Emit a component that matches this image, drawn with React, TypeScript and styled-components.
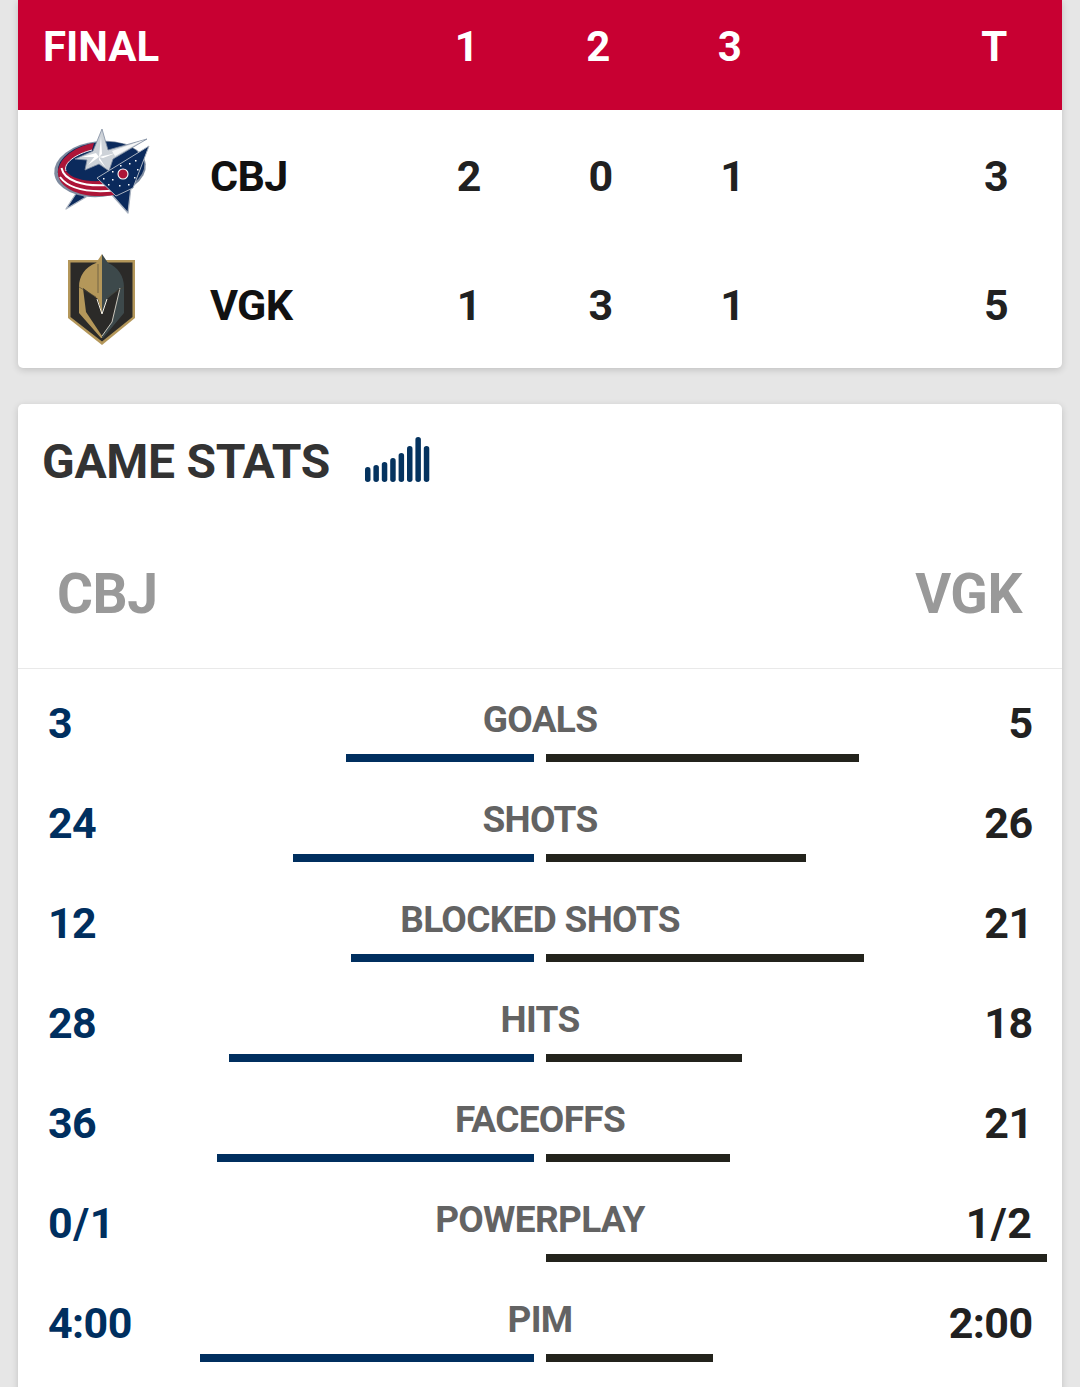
import React from "react";
import styled, { createGlobalStyle } from "styled-components";

const Global = createGlobalStyle`
  html, body { margin: 0; padding: 0; background: #e6e6e6; }
  body { font-family: Roboto, "Liberation Sans", sans-serif; height: 1387px; overflow: hidden; }
`;

const Page = styled.div`
  display: flex;
  flex-direction: column;
  gap: 36px;
  padding: 0 18px;
  height: 1387px;
  overflow: hidden;
`;

const Card = styled.section`
  background: #fff;
  border-radius: 5px;
  box-shadow: 0 2px 7px rgba(0, 0, 0, 0.16);
`;

const ScoreCard = styled(Card)`
  border-radius: 0 0 5px 5px;
  height: 368px;
  flex: none;
`;

const ScoreHeader = styled.div`
  display: grid;
  grid-template-columns: 383px repeat(3, 131.5px) 133px 131.5px;
  height: 110px;
  align-items: center;
  background: #c80032;
  color: #fff;
  font-size: 42px;
  font-weight: 700;
  padding-bottom: 18px;
  box-sizing: border-box;
`;

const HeaderTitle = styled.div`
  padding-left: 25px;
`;

const HeaderCell = styled.div`
  text-align: center;
`;

const TeamRow = styled.div`
  display: grid;
  grid-template-columns: 193px 192px repeat(3, 131.8px) 132px 131.5px;
  align-items: center;
  height: 129px;
  padding-top: 2px;
  box-sizing: border-box;
  color: #212121;
  font-size: 43px;
  font-weight: 700;
`;

const LogoCell = styled.div`
  display: flex;
  justify-content: center;
  padding: 0 25px 11px 0;
`;

const TeamName = styled.div`
  color: #111;
  letter-spacing: -0.7px;
  margin-left: -1px;
`;

const ScoreCell = styled.div`
  text-align: center;
  letter-spacing: -0.4px;
`;

const StatsCard = styled(Card)`
  flex: none;
  height: 1100px;
`;

const StatsTitleRow = styled.div`
  display: flex;
  align-items: center;
  gap: 35px;
  padding: 27px 0 1px 24px;
  height: 60px;
`;

const StatsTitle = styled.h2`
  margin: 0;
  color: #333;
  font-size: 48px;
  font-weight: 700;
  letter-spacing: -0.3px;
`;

const TeamsHeader = styled.div`
  display: flex;
  justify-content: space-between;
  align-items: center;
  height: 177px;
  padding: 28px 40px 0 39px;
  box-sizing: border-box;
  border-bottom: 1px solid #e9e9e9;
  color: #999;
  font-size: 55px;
  font-weight: 700;
  letter-spacing: -0.4px;
`;

const StatList = styled.div`
  display: flex;
  flex-direction: column;
`;

const StatRow = styled.div`
  display: grid;
  grid-template-columns: 1fr 1fr;
  grid-template-rows: 85px 15px;
  position: relative;
  height: 100px;
`;

const Value = styled.div<{ $side: "left" | "right"; $fraction?: boolean }>`
  align-self: center;
  padding: ${(p) => (p.$side === "left" ? "23px 30px 0" : "23px 29.500px 0 30px")};
  font-size: 43px;
  font-weight: 700;
  font-kerning: none;
  letter-spacing: ${(p) => (p.$fraction ? "0.5px" : "-0.6px")};
  color: ${(p) => (p.$side === "left" ? "#002f5f" : "#212121")};
  text-align: ${(p) => p.$side};
`;

const StatLabel = styled.div`
  position: absolute;
  left: 0;
  right: 0;
  top: 29px;
  text-align: center;
  color: #636363;
  font-size: 37px;
  line-height: 44px;
  font-weight: 700;
  letter-spacing: -0.68px;
`;

const BarTrack = styled.div<{ $side: "left" | "right" }>`
  display: flex;
  justify-content: ${(p) => (p.$side === "left" ? "flex-end" : "flex-start")};
  padding: ${(p) => (p.$side === "left" ? "0 6px 0 0" : "0 0 0 6px")};
`;

const Bar = styled.div<{ $side: "left" | "right" }>`
  height: 8px;
  background: ${(p) => (p.$side === "left" ? "#002f5f" : "#23231c")};
`;

const SignalWrap = styled.div`
  display: flex;
  margin: -4px 0 0 0;
`;

const stats = [
  { label: "GOALS", l: "3", r: "5", a: 3, b: 5 },
  { label: "SHOTS", l: "24", r: "26", a: 24, b: 26 },
  { label: "BLOCKED SHOTS", l: "12", r: "21", a: 12, b: 21 },
  { label: "HITS", l: "28", r: "18", a: 28, b: 18 },
  { label: "FACEOFFS", l: "36", r: "21", a: 36, b: 21 },
  { label: "POWERPLAY", l: "0/1", r: "1/2", a: 0, b: 1 },
  { label: "PIM", l: "4:00", r: "2:00", a: 4, b: 2 },
];

const CbjLogo = () => (
  <svg width="105" height="90" viewBox="0 0 105 90">
    <path d="M27 67L16 84 36 72ZM62 70L78 88 81 62Z" fill="#0b2a5c" stroke="#a9b2bf" strokeWidth="1.300" strokeLinejoin="round" />
    <ellipse cx="50" cy="44" rx="46" ry="28" fill="#7f8ca0" transform="rotate(-6 50 44)" />
    <ellipse cx="51" cy="43" rx="43.500" ry="26" fill="#0b2a5c" transform="rotate(-6 51 43)" />
    <path d="M44 18C22 22 7 36 8 49 9 63 30 72 52 71 64 71 74 68 80 62L58 55C42 58 22 55 16 46 13 38 26 29 42 25Z" fill="#ad1538" />
    <path d="M16 46C13 38 26 29 42 25" fill="none" stroke="#e8ebef" strokeWidth="1" />
    <path d="M11.500 43C14 55 32 62 58 60M10 52C18 63 36 68 64 65.500" fill="none" stroke="#fff" strokeWidth="2" />
    <path d="M99 21L47 53 66 71 83 63Z" fill="#0b2a5c" stroke="#a9b2bf" strokeWidth="1" strokeLinejoin="round" />
    <circle cx="73" cy="49" r="5" fill="#ad1538" stroke="#fff" strokeWidth="1.100" />
    <path d="M85 35h1.500v1.500h-1.500zM79 38h1.500v1.500h-1.500zM87 44h1.500v1.500h-1.500zM84 52h1.500v1.500h-1.500zM78 59h1.500v1.500h-1.500zM69 60h1.500v1.500h-1.500zM62 54h1.500v1.500h-1.500zM58 59h1.500v1.500h-1.500zM53 53h1.500v1.500h-1.500zM62 46h1.500v1.500h-1.500zM70 40h1.500v1.500h-1.500z" fill="#fff" />
    <path d="M52 4L58 25 97 14 63 34 59 46 49 39 35 45 37 35 25 34 43 26Z" fill="#cdd2d8" stroke="#7f8ca0" strokeWidth="0.800" strokeLinejoin="round" />
    <path d="M51 11L52 29 49 32ZM49 32L66 28 53 33ZM49 32L56 43 49 35ZM49 32L38 40 45 31ZM49 32L32 32 46 28Z" fill="#fff" />
    <path d="M62 26L94 15 65 31Z" fill="#f6f7f8" />
  </svg>
);

const VgkLogo = () => (
  <svg width="84" height="98" viewBox="0 0 84 98">
    <path d="M8 10H75V68L42 95 8 68Z" fill="#b4975a" />
    <path d="M10.500 12.500H72.500V67L42 91.500 10.500 67Z" fill="#2b2a28" />
    <path d="M42 4L36 13C25 17 19 26 19 37V63L41 88H42Z" fill="#b4975a" />
    <path d="M42 4L48 13C58 17 64 26 64 37V63L43 88H42Z" fill="#3d494b" />
    <path d="M23 38L38 49 42 64V86L26 62Z" fill="#2b2a28" />
    <path d="M60 38L47 49 42 64V86L52 72Z" fill="#2b2a28" />
    <path d="M60 38L52 72 42 86" fill="none" stroke="#efe9da" strokeWidth="0.800" />
    <path d="M37 49L42 64 47 49" fill="none" stroke="#f4efe3" strokeWidth="1" />
    <path d="M19 37L36 47M64 37L47 47M38 14V43" fill="none" stroke="#4a4436" strokeWidth="0.600" />
  </svg>
);

const SignalIcon = () => (
  <svg width="66" height="46" viewBox="0 0 66 46">
    {[15, 17, 20, 24, 29, 36, 45, 36].map((h, i) => (
      <rect key={i} x={i * 8.4} y={46 - h} width="5.500" height={h} rx="2.700" fill="#05335f" />
    ))}
  </svg>
);

export default function App() {
  return (
    <Page>
      <Global />
      <ScoreCard>
        <ScoreHeader>
          <HeaderTitle>FINAL</HeaderTitle>
          <HeaderCell>1</HeaderCell>
          <HeaderCell>2</HeaderCell>
          <HeaderCell>3</HeaderCell>
          <span />
          <HeaderCell>T</HeaderCell>
        </ScoreHeader>
        <TeamRow>
          <LogoCell><CbjLogo /></LogoCell>
          <TeamName>CBJ</TeamName>
          <ScoreCell>2</ScoreCell>
          <ScoreCell>0</ScoreCell>
          <ScoreCell>1</ScoreCell>
          <span />
          <ScoreCell>3</ScoreCell>
        </TeamRow>
        <TeamRow>
          <LogoCell><VgkLogo /></LogoCell>
          <TeamName>VGK</TeamName>
          <ScoreCell>1</ScoreCell>
          <ScoreCell>3</ScoreCell>
          <ScoreCell>1</ScoreCell>
          <span />
          <ScoreCell>5</ScoreCell>
        </TeamRow>
      </ScoreCard>
      <StatsCard>
        <StatsTitleRow>
          <StatsTitle>GAME STATS</StatsTitle>
          <SignalWrap><SignalIcon /></SignalWrap>
        </StatsTitleRow>
        <TeamsHeader>
          <span>CBJ</span>
          <span>VGK</span>
        </TeamsHeader>
        <StatList>
          {stats.map((s) => {
            const total = s.a + s.b;
            const fraction = s.l.includes("/");
            return (
              <StatRow key={s.label}>
                <Value $side="left" $fraction={fraction}>{s.l}</Value>
                <Value $side="right" $fraction={fraction}>{s.r}</Value>
                <StatLabel>{s.label}</StatLabel>
                <BarTrack $side="left">
                  <Bar $side="left" style={{ width: Math.ceil((501 * s.a) / total) }} />
                </BarTrack>
                <BarTrack $side="right">
                  <Bar $side="right" style={{ width: Math.floor((501 * s.b) / total) }} />
                </BarTrack>
              </StatRow>
            );
          })}
        </StatList>
      </StatsCard>
    </Page>
  );
}
